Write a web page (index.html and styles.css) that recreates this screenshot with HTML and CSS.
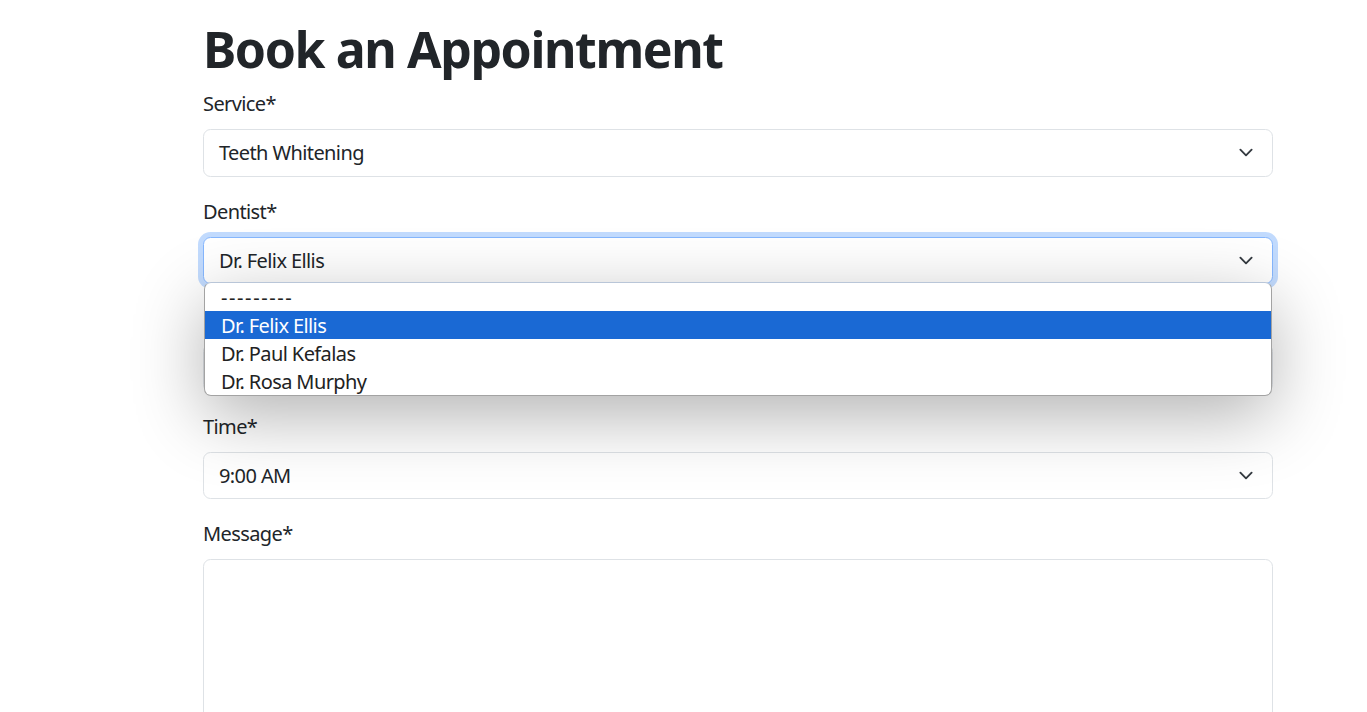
FILE: index.html
```html
<!DOCTYPE html>
<html lang="en">
<head>
<meta charset="utf-8">
<title>Book an Appointment</title>
<link rel="stylesheet" href="styles.css">
</head>
<body>
<main class="page">
  <h1 class="title">Book an Appointment</h1>
  <form class="form">
    <div class="group">
      <label class="label">Service*</label>
      <div class="select">
        <span class="value">Teeth Whitening</span>
        <svg class="chev" viewBox="0 0 16 16" width="20" height="15"><path d="m2 5 6 6 6-6" fill="none" stroke="#343a40" stroke-width="2" stroke-linecap="round" stroke-linejoin="round"/></svg>
      </div>
    </div>
    <div class="group has-menu">
      <label class="label">Dentist*</label>
      <div class="select focused">
        <span class="value">Dr. Felix Ellis</span>
        <svg class="chev" viewBox="0 0 16 16" width="20" height="15"><path d="m2 5 6 6 6-6" fill="none" stroke="#343a40" stroke-width="2" stroke-linecap="round" stroke-linejoin="round"/></svg>
      </div>
      <ul class="menu">
        <li class="opt opt-empty">---------</li>
        <li class="opt selected">Dr. Felix Ellis</li>
        <li class="opt">Dr. Paul Kefalas</li>
        <li class="opt">Dr. Rosa Murphy</li>
      </ul>
    </div>
    <div class="group">
      <label class="label">Date*</label>
      <div class="select">
        <span class="value"></span>
      </div>
    </div>
    <div class="group">
      <label class="label">Time*</label>
      <div class="select">
        <span class="value">9:00 AM</span>
        <svg class="chev" viewBox="0 0 16 16" width="20" height="15"><path d="m2 5 6 6 6-6" fill="none" stroke="#343a40" stroke-width="2" stroke-linecap="round" stroke-linejoin="round"/></svg>
      </div>
    </div>
    <div class="group">
      <label class="label">Message*</label>
      <div class="textarea"></div>
    </div>
  </form>
</main>
</body>
</html>
```
FILE: styles.css
```css
* { box-sizing: border-box; }
html, body { margin: 0; padding: 0; background: #fff; }
body {
  font-family: "Noto Sans", "Open Sans", sans-serif;
  font-size: 20px;
  line-height: 1.5;
  letter-spacing: -0.6px;
  color: #212529;
  overflow: hidden;
}
.page {
  width: 1070px;
  margin-left: 203px;
  padding-top: 19px;
}
.title {
  margin: 0 0 10px;
  font-size: 50px;
  line-height: 60px;
  font-weight: 700;
  letter-spacing: -1.4px;
}
.form { display: flex; flex-direction: column; gap: 20px; }
.group { position: relative; display: flex; flex-direction: column; }
.label { display: block; height: 30px; margin-bottom: 10px; }
.select {
  height: 47.5px;
  border: 1px solid #dee2e6;
  border-radius: 7.5px;
  padding: 1px 15px 0;
  display: flex;
  align-items: center;
  justify-content: space-between;
  background: #fff;
}
.select.focused {
  border-color: #86b7fe;
  box-shadow: 0 0 0 5px rgba(13, 110, 253, 0.25);
}
.chev { display: block; margin-right: 1px; margin-top: -1px; }
.textarea {
  height: 200px;
  border: 1px solid #dee2e6;
  border-radius: 7.5px;
}
.menu {
  position: absolute;
  left: 1px;
  right: 1px;
  top: 85.5px;
  margin: 0;
  padding: 0;
  list-style: none;
  background: #fff;
  border: 1px solid #a3a3a3;
  border-top-color: #b9c6d8;
  border-radius: 7px;
  overflow: hidden;
  box-shadow: 0 20px 70px rgba(0, 0, 0, 0.3);
  z-index: 5;
}
.opt {
  height: 28px;
  line-height: 29px;
  padding-left: 16px;
  color: #222;
}
.opt-empty { letter-spacing: 1.6px; }
.opt.selected { background: #1a69d4; color: #fff; }
```
